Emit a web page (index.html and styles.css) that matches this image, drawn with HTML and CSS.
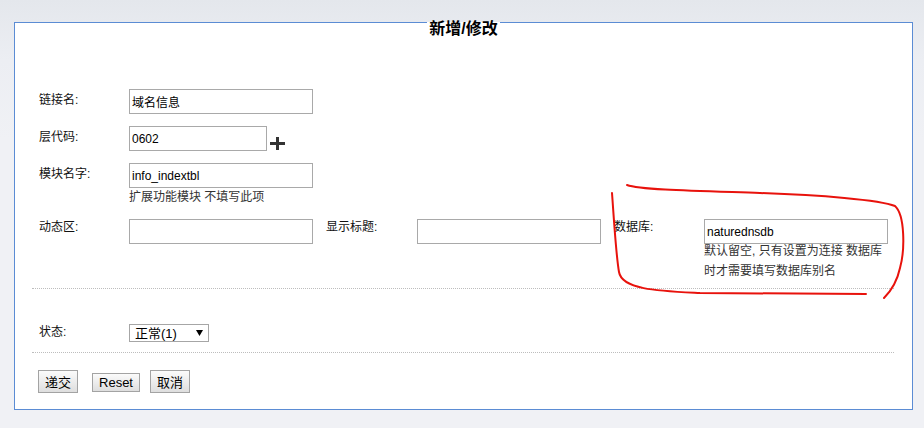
FILE: index.html
```html
<!DOCTYPE html>
<html lang="zh-CN">
<head>
<meta charset="utf-8">
<title>新增/修改</title>
<link rel="stylesheet" href="styles.css">
</head>
<body>
<div class="page">
  <fieldset class="panel">
    <legend class="panel-title">新增/修改</legend>
    <div class="form">
      <div class="rows">
        <div class="row">
          <label class="lbl">链接名:</label>
          <div class="field"><input class="txt" type="text" value="域名信息"></div>
        </div>
        <div class="row">
          <label class="lbl">层代码:</label>
          <div class="field field--inline">
            <input class="txt txt--short" type="text" value="0602">
            <svg class="plus" width="15" height="13" viewBox="0 0 15 13" aria-hidden="true">
              <rect x="0" y="5" width="15" height="3" fill="#333"/>
              <rect x="6" y="0" width="3" height="13" fill="#333"/>
            </svg>
          </div>
        </div>
        <div class="row">
          <label class="lbl">模块名字:</label>
          <div class="field">
            <input class="txt" type="text" value="info_indextbl">
            <div class="help">扩展功能模块 不填写此项</div>
          </div>
        </div>
        <div class="row row--low">
          <label class="lbl">动态区:</label>
          <div class="field"><input class="txt" type="text" value=""></div>
          <label class="lbl">显示标题:</label>
          <div class="field"><input class="txt" type="text" value=""></div>
          <label class="lbl">数据库:</label>
          <div class="field">
            <input class="txt" type="text" value="naturednsdb">
            <div class="help help--tight">默认留空, 只有设置为连接 数据库时才需要填写数据库别名</div>
          </div>
        </div>
      </div>
      <hr class="rule">
      <div class="row row--low row--status">
        <label class="lbl">状态:</label>
        <div class="field">
          <span class="select-wrap">
            <select class="select"><option>正常(1)</option></select>
            <svg class="select-arrow" width="7" height="6" viewBox="0 0 7 6" aria-hidden="true"><polygon points="0,0 7,0 3.5,6" fill="#000"/></svg>
          </span>
        </div>
      </div>
      <hr class="rule rule--second">
      <div class="actions">
        <button class="btn btn--first" type="button">递交</button>
        <button class="btn btn--second" type="reset">Reset</button>
        <button class="btn" type="button">取消</button>
      </div>
    </div>
  </fieldset>
  <svg class="annotation" width="924" height="428" viewBox="0 0 924 428" aria-hidden="true">
    <path d="M627,185 C640,190 700,191 760,193 S880,200 895,206 C905,215 905,250 900,268 C897,282 890,292 884,298" fill="none" stroke="#e8120c" stroke-width="2" stroke-linecap="round"/>
    <path d="M612,193 C614,220 616,255 619,272 C622,290 660,291 700,293 L866,294" fill="none" stroke="#e8120c" stroke-width="2" stroke-linecap="round"/>
  </svg>
</div>
</body>
</html>
```

FILE: styles.css
```css
html, body {
  margin: 0;
  padding: 0;
}

body {
  background: linear-gradient(to bottom, #e4e7ec 0, #eceef3 60px, #f0f1f5 140px, #f0f1f5 100%);
  font-family: Arial, "Liberation Sans", "Noto Sans CJK SC", sans-serif;
  font-size: 12px;
  color: #000;
  min-height: 428px;
}

.page {
  position: relative;
  box-sizing: border-box;
  height: 428px;
  padding: 6px 0 0 14px;
}

.panel {
  margin: 0;
  padding: 0;
  width: 899px;
  box-sizing: border-box;
  border: 1px solid #5b8cd4;
  background: #fff;
  min-inline-size: auto;
}

.panel-title {
  margin: 0 auto;
  padding: 14px 2px 0;
  font-size: 16px;
  line-height: 18px;
  font-weight: bold;
  color: #000;
}

.form {
  padding: 51px 18px 16px 17px;
}

.rows {
  display: flex;
  flex-direction: column;
  gap: 12px;
}

.row {
  display: grid;
  grid-template-columns: 90px 197px 91px 197px 90px 184px;
  align-items: start;
  padding-left: 7px;
}

.lbl {
  padding-top: 3px;
  line-height: 16px;
  color: #111;
}

.row--low .lbl {
  padding-top: 0;
}

.field--inline {
  display: flex;
  align-items: flex-end;
}

.txt {
  display: block;
  margin: 0;
  width: 184px;
  height: 25px;
  box-sizing: border-box;
  border: 1px solid #a9a9a9;
  padding: 0 2px;
  font-family: Arial, "Liberation Sans", "Noto Sans CJK SC", sans-serif;
  font-size: 12px;
  color: #000;
  background: #fff;
  outline: none;
}

.txt--short {
  width: 138px;
}

.plus {
  display: block;
  margin: 0 0 1px 3px;
}

.help {
  width: 184px;
  margin-top: -1px;
  line-height: 20px;
  color: #333;
}

.help--tight {
  margin-top: -3px;
}

.rule {
  margin: 7px 0 0;
  height: 0;
  border: 0;
  border-top: 1px dotted #bdbdbd;
}

.rule--second {
  margin-top: 10px;
}

.row--status {
  margin-top: 35px;
}

.select-wrap {
  position: relative;
  display: block;
  width: 80px;
}

.select {
  display: block;
  appearance: none;
  -webkit-appearance: none;
  margin: 0;
  width: 80px;
  height: 18px;
  box-sizing: border-box;
  border: 1px solid #a6a6a6;
  border-radius: 0;
  padding: 0 5px;
  background: #fff;
  font-family: Arial, "Liberation Sans", "Noto Sans CJK SC", sans-serif;
  font-size: 13px;
  color: #000;
  outline: none;
}

.select-arrow {
  position: absolute;
  right: 6px;
  top: 6px;
  pointer-events: none;
}

.actions {
  display: flex;
  align-items: baseline;
  margin-top: 17px;
  padding-left: 6px;
}

.btn {
  margin: 0;
  padding: 1px 6px;
  border: 1px solid #a3a3a3;
  border-radius: 0;
  background: linear-gradient(to bottom, #fbfbfb, #dedede);
  font-family: Arial, "Liberation Sans", "Noto Sans CJK SC", sans-serif;
  font-size: 13px;
  color: #000;
}

.btn--first {
  margin-right: 14px;
}

.btn--second {
  margin-right: 10px;
}

.annotation {
  position: absolute;
  left: 0;
  top: 0;
  pointer-events: none;
}
```
